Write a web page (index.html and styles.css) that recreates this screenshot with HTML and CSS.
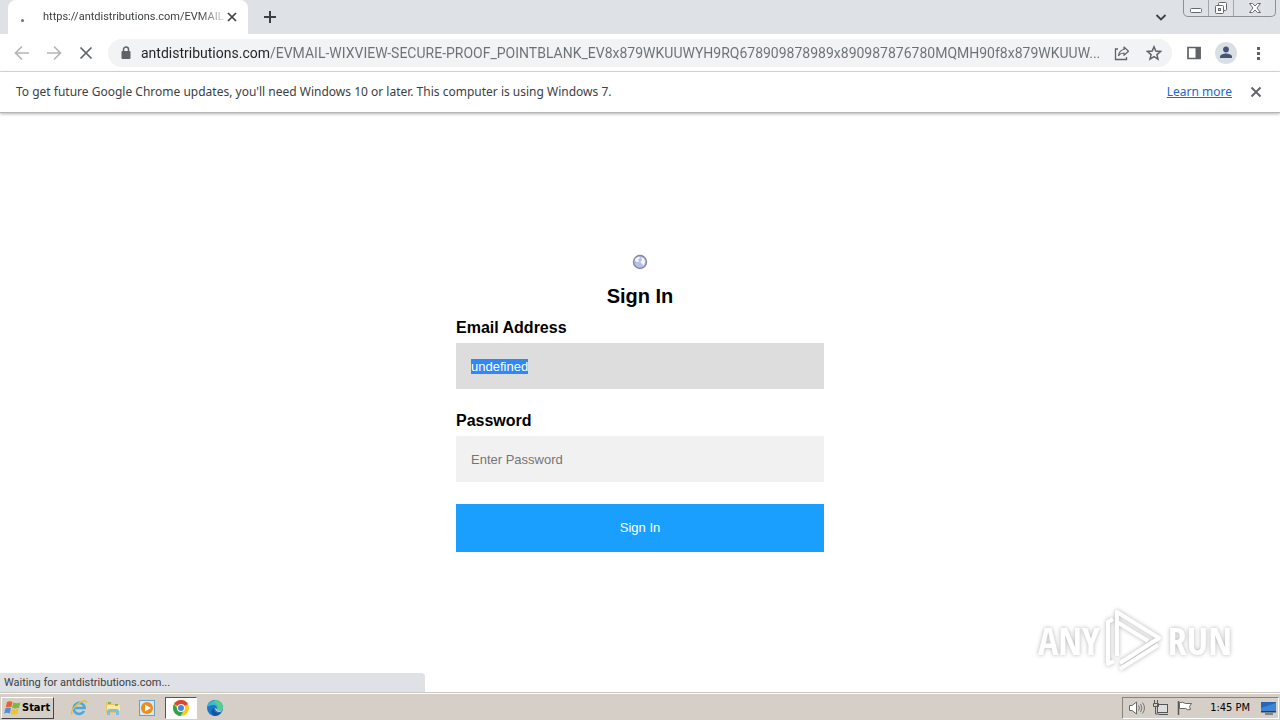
FILE: index.html
```html
<!DOCTYPE html>
<html lang="en">
<head>
<meta charset="utf-8">
<title>Sign In</title>
<link rel="stylesheet" href="styles.css">
</head>
<body>
<header class="tabstrip">
  <span class="prev-edge"></span>
  <div class="tab">
    <span class="spinner"></span>
    <span class="tab-title">https://antdistributions.com/EVMAIL</span>
    <button class="icon-btn" aria-label="Close tab"><svg width="16" height="16" viewBox="0 0 16 16"><path d="M4 4l8 8M12 4l-8 8" stroke="#3c4043" stroke-width="1.7"/></svg></button>
  </div>
  <button class="icon-btn new-tab" aria-label="New tab"><svg width="16" height="16" viewBox="0 0 16 16"><path d="M8 2v12M2 8h12" stroke="#3c4043" stroke-width="2"/></svg></button>
  <button class="icon-btn tab-search" aria-label="Search tabs"><svg width="16" height="16" viewBox="0 0 16 16"><path d="M3.500 6l4.500 4.500L12.500 6" fill="none" stroke="#3c4043" stroke-width="1.800"/></svg></button>
  <div class="window-controls">
    <button class="win-min" aria-label="Minimize"><svg width="14" height="16" viewBox="0 0 14 16"><rect x="1.500" y="8.500" width="11" height="4" rx="1" fill="#fff" stroke="#65686f"/></svg></button>
    <button class="win-max" aria-label="Restore"><svg width="14" height="16" viewBox="0 0 14 16"><rect x="4.500" y="2.500" width="8" height="8" rx="1" fill="#fff" stroke="#65686f"/><rect x="1.500" y="5.500" width="8" height="8" rx="1" fill="#fff" stroke="#65686f"/><rect x="4.500" y="8.500" width="2" height="2" fill="#dee1e6" stroke="#65686f"/></svg></button>
    <button class="win-close" aria-label="Close"><svg width="14" height="16" viewBox="0 0 14 16"><path d="M1.500 3.500h3L7 6l2.500-2.500h3L9 8l3.500 4.500h-3L7 10l-2.500 2.500h-3L5 8z" fill="#fff" stroke="#65686f"/></svg></button>
  </div>
</header>
<nav class="toolbar">
  <button class="icon-btn" aria-label="Back"><svg width="16" height="16" viewBox="0 0 16 16"><path d="M15 8H2M8 1.500L1.500 8 8 14.500" fill="none" stroke="#b4b6b9" stroke-width="1.700"/></svg></button>
  <button class="icon-btn" aria-label="Forward"><svg width="16" height="16" viewBox="0 0 16 16"><path d="M1 8h13M8 1.500L14.500 8 8 14.500" fill="none" stroke="#b4b6b9" stroke-width="1.700"/></svg></button>
  <button class="icon-btn" aria-label="Stop loading"><svg width="16" height="16" viewBox="0 0 16 16"><path d="M2.500 2.500l11 11M13.500 2.500l-11 11" stroke="#5f6368" stroke-width="1.700"/></svg></button>
  <div class="omnibox">
    <svg class="lock" width="10" height="14" viewBox="0 0 10 14"><path d="M2.500 6V3.500a2.500 2.500 0 0 1 5 0V6" fill="none" stroke="#5f6368" stroke-width="1.500"/><rect x="0.500" y="5" width="9" height="8" rx="1" fill="#5f6368"/></svg>
    <input class="url" type="text" aria-label="Address" spellcheck="false" value="antdistributions.com/EVMAIL-WIXVIEW-SECURE-PROOF_POINTBLANK_EV8x879WKUUWYH9RQ678909878989x890987876780MQMH90f8x879WKUUW...">
    <button class="icon-btn" aria-label="Share"><svg width="16" height="16" viewBox="0 0 16 16"><path d="M4 4H1.500v10.500h11V12" fill="none" stroke="#5f6368" stroke-width="1.300"/><path d="M10 2l4.500 4.200L10 10.300V8c-2.500 0-4 .6-5.500 2.600C5 7.300 6.800 4.900 10 4.500z" fill="none" stroke="#5f6368" stroke-width="1.200" stroke-linejoin="round"/></svg></button>
    <button class="icon-btn" aria-label="Bookmark"><svg width="16" height="16" viewBox="0 0 16 16"><path d="M8 1.800l1.800 4.300 4.700.4-3.600 3.100 1.100 4.600L8 11.700l-4 2.500 1.100-4.600L1.500 6.500l4.700-.4z" fill="none" stroke="#5f6368" stroke-width="1.500"/></svg></button>
  </div>
  <div class="actions">
    <button class="icon-btn" aria-label="Side panel"><svg width="16" height="16" viewBox="0 0 16 16"><path d="M2 2.500h12v11H2z" fill="none" stroke="#5f6368" stroke-width="1.700"/><path d="M9.500 2h5v12h-5z" fill="#5f6368"/></svg></button>
    <button class="icon-btn" aria-label="Profile"><svg width="22" height="22" viewBox="0 0 22 22"><circle cx="11" cy="11" r="11" fill="#dadfe6"/><circle cx="11" cy="7.500" r="2.900" fill="#475372"/><path d="M5 16v-1.500c0-2 4-3 6-3s6 1 6 3V16z" fill="#475372"/></svg></button>
    <button class="icon-btn" aria-label="Menu"><svg width="16" height="16" viewBox="0 0 16 16"><path d="M7 2h3v3H7zM7 7h3v3H7zM7 12h3v3H7z" fill="#5f6368"/></svg></button>
  </div>
</nav>
<section class="infobar">
  <p class="notice">To get future Google Chrome updates, you'll need Windows 10 or later. This computer is using Windows 7.</p>
  <a class="learn" href="#">Learn more</a>
  <button class="icon-btn" aria-label="Dismiss"><svg width="16" height="16" viewBox="0 0 16 16"><path d="M3.500 3.500l9 9M12.500 3.500l-9 9" stroke="#5f6368" stroke-width="1.800"/></svg></button>
</section>
<main class="page">
  <form class="signin">
    <svg class="globe" width="16" height="16" viewBox="0 0 16 16"><circle cx="8" cy="8" r="6.500" fill="#b9c0e6" stroke="#8388a8" stroke-width="1.400"/><path d="M3.500 4.500L7 2.500l1 1.500-2 1.500 1 2.500L5 8 3 6.500zM9 3l3 1.500 1 3-1 4-2-1.500L8.500 8 10 6z" fill="#f5f7ff"/></svg>
    <h1 class="heading">Sign In</h1>
    <label class="label" for="email">Email Address</label>
    <input class="field focused" id="email" type="text" value="undefined" autofocus>
    <label class="label" for="password">Password</label>
    <input class="field" id="password" type="password" placeholder="Enter Password">
    <button class="submit" type="button">Sign In</button>
  </form>
  <div class="status">Waiting for antdistributions.com...</div>
  <div class="watermark">
    <span>ANY</span>
    <svg width="60" height="68" viewBox="0 0 60 68"><g fill="none" stroke="#fff" stroke-width="4" stroke-linejoin="round"><path d="M13 50V6l42 26-39 25"/><path d="M13 16l31 19"/><path d="M9 13l-5 3v42l6-3M16 63l38-24"/></g></svg>
    <span>RUN</span>
  </div>
</main>
<footer class="taskbar">
  <button class="start"><svg width="17" height="16" viewBox="0 0 17 16"><path d="M3 2c2-1 4-1 5.500 0L7.300 7.300C5.500 6.500 4 6.500 1.800 7.300z" fill="#e8622c"/><path d="M9.300 2.500c2 1 4.500 1 7 0L15 7.800c-2.500 1-5 1-7 0z" fill="#7db93c"/><path d="M1.500 8.300c2-1 4-1 5.500 0L5.700 13.500c-2-1-3.500-1-5.500 0z" fill="#4d91d8"/><path d="M7.700 8.800c2 1 4.500 1 7 0L13.500 14c-2.500 1-5 1-7 0z" fill="#f5c12e"/></svg>Start</button>
  <div class="launchers">
    <button class="task" aria-label="Internet Explorer"><svg width="18" height="18" viewBox="0 0 18 18"><path d="M14 12a5.500 5.500 0 1 1 .6-3H5" fill="none" stroke="#4ba9df" stroke-width="2.600"/><path d="M2 15.500C0 13 5 6 11 3c3-1.600 5.500-2 5 1" fill="none" stroke="#e9bd3b" stroke-width="1.400"/></svg></button>
    <button class="task" aria-label="Explorer"><svg width="18" height="18" viewBox="0 0 18 18"><path d="M2 3h5l1 2h7v9H2z" fill="#e7c763"/><path d="M3 6h13v6H3z" fill="#f8e8a0"/><path d="M4 4h3M11 6h3" stroke="#5cae65" stroke-width="1.500"/><path d="M3 16v-4.500l2-1.500h8l2 1.500V16h-3v-3H6v3z" fill="#82bde2"/></svg></button>
    <button class="task" aria-label="Media Player"><svg width="18" height="18" viewBox="0 0 18 18"><rect x="1.500" y="1.500" width="15" height="15" fill="#d5e8f5" stroke="#69a1cb"/><circle cx="9" cy="9" r="6" fill="#ef8b18"/><path d="M7 5.500v7L13 9z" fill="#fff"/></svg></button>
    <button class="task active" aria-label="Chrome"><svg width="18" height="18" viewBox="0 0 18 18"><circle cx="9" cy="9" r="8" fill="#f8c91c"/><path d="M9 9L2.100 5A8 8 0 0 1 15.900 5z" fill="#df4334"/><path d="M2.100 5A8 8 0 0 0 8.500 17l3.500-6H6z" fill="#30a252"/><circle cx="9" cy="9" r="4" fill="#fff"/><circle cx="9" cy="9" r="3" fill="#4285e8"/></svg></button>
    <button class="task" aria-label="Edge"><svg width="18" height="18" viewBox="0 0 18 18"><circle cx="9" cy="9" r="8" fill="#1b78c9"/><path d="M1.200 8A8 8 0 0 1 17 8.500c0 3-3.500 4-6 2.500 1-3-1-5-4-5-2.500 0-5 1-5.800 2z" fill="#35bdd0"/><path d="M10 1a8 8 0 0 1 7 7.500c0 3-3.500 4-6 2.500 2-4 0-7-4-8z" fill="#56cf8b"/><path d="M8 9c-1 3 2 6 7 4.500A8 8 0 0 1 9 17c-4-1-5-6-1-8z" fill="#14539d"/><path d="M9 9.500c1-1 2 .3 2 1.500 1.500 1 4 1 5.500 0-1 2.500-6.500 3-7.500-1.500z" fill="#d5cfc8"/></svg></button>
  </div>
  <div class="tray">
    <svg width="18" height="16" viewBox="0 0 18 16"><path d="M1.500 5.500H4L8.500 2v12L4 10.500H1.500z" fill="#fff" stroke="#666"/><path d="M10.500 5.500q2 2.500 0 5M12.500 4q3 4 0 8M14.500 2.500q4 5.500 0 11" fill="none" stroke="#777"/></svg>
    <svg width="18" height="16" viewBox="0 0 18 16"><rect x="5.500" y="4.500" width="10" height="8" fill="#ddd" stroke="#555"/><path d="M7 14.500h9M2.500 0v3M5.500 0v3M1.500 3.500h5v3h-5zM3.500 7v7H7" fill="none" stroke="#555"/></svg>
    <svg width="18" height="16" viewBox="0 0 18 16"><path d="M2.500 1v14" stroke="#555" stroke-width="1.500"/><path d="M3.500 2.500q3-1 6 1h6l-2 3 1 3q-3 1-5-1H3.500z" fill="#fff" stroke="#666"/></svg>
    <time class="clock">1:45 PM</time>
    <svg width="16" height="16" viewBox="0 0 16 16"><path d="M0 2h15v9H0z" fill="#2566bb"/><path d="M0 8l15-5v8H0z" fill="#3f85d2"/><path d="M0 11h15v1.500H0z" fill="#223f6b"/><path d="M4 14h8" stroke="#334"/></svg>
  </div>
</footer>
<script src="main.js"></script>
</body>
</html>
```

FILE: styles.css
```css
* { box-sizing: border-box; }
body {
  margin: 0;
  min-height: 100vh;
  display: flex;
  flex-direction: column;
  background: #fff;
  color: #3c4043;
  font: 12px/16px "Noto Sans", "DejaVu Sans", sans-serif;
}
button { font: inherit; color: inherit; cursor: pointer; }
svg { display: block; flex: none; }
.icon-btn { padding: 0; border: 0; background: none; flex: none; }

.tabstrip { display: flex; align-items: center; height: 34px; background: #dee1e6; }
.prev-edge { width: 8px; height: 34px; border-radius: 0 0 8px 0; }
.tab {
  display: flex;
  align-items: center;
  width: 240px;
  height: 34px;
  padding: 0 8px 0 13px;
  border-radius: 8px 8px 0 0;
  background: #fff;
}
.spinner { width: 3px; height: 3px; margin: 6px 19px 0 0; border-radius: 50%; background: #5b6dc0; flex: none; }
.tab-title {
  flex: 1;
  min-width: 0;
  white-space: nowrap;
  font: 11px/16px Roboto, sans-serif;
  -webkit-mask-image: linear-gradient(to right, #000 86%, rgba(0, 0, 0, 0.2));
  mask-image: linear-gradient(to right, #000 86%, rgba(0, 0, 0, 0.2));
}
.new-tab { margin-left: 14px; }
.tab-search { margin-left: auto; }
.window-controls {
  display: flex;
  align-self: flex-start;
  height: 17px;
  margin: 0 4px 0 14px;
  border: 1px solid #8c9098;
  border-top: 0;
  border-radius: 0 0 5px 5px;
}
.window-controls button { display: flex; align-items: center; justify-content: center; padding: 0; border: 0; background: none; }
.window-controls .win-min, .window-controls .win-max { width: 25px; border-right: 1px solid #a2a6ad; }
.window-controls .win-close { width: 41px; }

.toolbar {
  display: flex;
  align-items: center;
  gap: 16px;
  height: 38px;
  padding: 0 14px;
  border-bottom: 1px solid #dadce0;
}
.omnibox {
  flex: 1;
  min-width: 0;
  display: flex;
  align-items: center;
  gap: 16px;
  height: 28px;
  margin: 0 -2px;
  padding: 0 10px 0 13px;
  border-radius: 14px;
  background: #f1f3f4;
}
.actions { display: flex; align-items: center; gap: 13px; }
.url {
  flex: 1;
  min-width: 0;
  margin: 0 -6px;
  padding: 0;
  border: 0;
  outline: 0;
  background: linear-gradient(to right, #202124 129px, #6b7075 129px);
  -webkit-background-clip: text;
  background-clip: text;
  color: transparent;
  font: 14px/20px Roboto, sans-serif;
}
.infobar {
  position: relative;
  display: flex;
  align-items: center;
  gap: 16px;
  height: 41px;
  padding: 0 16px;
  border-bottom: 1px solid #b5b5b5;
  box-shadow: 0 1px 3px rgba(0, 0, 0, 0.3);
}
.notice { flex: 1; margin: 0; }
.learn { color: #2267c4; }

.page { position: relative; flex: 1; padding: 141px 16px 0; font-family: "Liberation Sans", Arial, sans-serif; color: #000; }
.signin { display: flex; flex-direction: column; max-width: 368px; margin: 0 auto; }
.globe { align-self: center; }
.heading { margin: 14px 0 10px; text-align: center; font-size: 20px; line-height: 24px; }
.label { margin-bottom: 5px; font-size: 16px; line-height: 20px; font-weight: bold; }
.field {
  height: 46px;
  margin-bottom: 22px;
  padding: 0 15px;
  border: 0;
  outline: 0;
  background: #f1f1f1;
  font: 13px/16px "Liberation Sans", Arial, sans-serif;
}
.field::placeholder { color: #757575; }
.focused { background: #ddd; }
.field::selection { background: #2f88f5; color: #fff; }
.submit { height: 48px; border: 0; background: #1a9fff; color: #fff; font-size: 13px; }
.status {
  position: absolute;
  left: 0;
  bottom: 0;
  width: 425px;
  padding: 2px 4px 1px;
  border-radius: 0 4px 0 0;
  background: #dee1e6;
  color: #3c4043;
  font: 11px/16px Roboto, sans-serif;
}
.watermark {
  position: absolute;
  right: 48px;
  bottom: 18px;
  display: flex;
  align-items: center;
  gap: 4px;
  color: #fff;
  font: 38px/48px "Open Sans Condensed", "Roboto Condensed", "Liberation Sans Narrow", sans-serif;
  filter: drop-shadow(0 0 2px rgba(0, 0, 0, 0.3));
}

.taskbar {
  display: flex;
  align-items: center;
  height: 28px;
  padding: 2px 1px 0;
  border-top: 1px solid #c9c9bf;
  box-shadow: inset 0 1px #fff;
  background: #d5cfc8;
  color: #000;
}
.start {
  display: flex;
  align-items: center;
  gap: 1px;
  height: 22px;
  width: 53px;
  padding: 0 2px;
  border: 1px solid;
  border-color: #fff #444 #444 #fff;
  background: #d5cfc8;
  font: bold 11px/16px "DejaVu Sans Condensed", sans-serif;
}
.launchers { display: flex; gap: 2px; margin-left: 9px; }
.task { display: grid; place-items: center; width: 32px; height: 22px; padding: 0; border: 1px solid transparent; background: none; }
.task.active { border-color: #555 #fff #fff #555; background: #fff; }
.tray {
  display: flex;
  align-items: center;
  gap: 6px;
  height: 22px;
  margin-left: auto;
  padding: 0 1px 0 5px;
  border: 1px solid;
  border-color: #88847d #fff #fff #88847d;
}
.clock { margin: 0 5px 0 10px; font: 11px/16px "DejaVu Sans Condensed", sans-serif; }
```

FILE: main.js
```js
const email = document.getElementById("email");
email.focus();
email.select();
```
